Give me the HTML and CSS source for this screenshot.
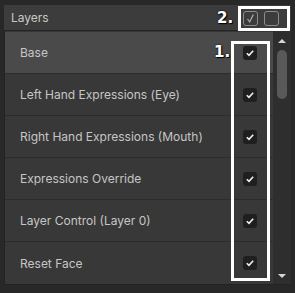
FILE: index.html
```html
<!DOCTYPE html>
<html>
<head>
<meta charset="utf-8">
<link rel="stylesheet" href="styles.css">
</head>
<body>
<div class="panel">
  <div class="header">
    <span class="title">Layers</span>
    <div class="tools">
      <span class="tool">
        <svg width="13" height="13" viewBox="0 0 13 13"><path d="M3.5 7 L5.7 9.9 L9.3 2.5" fill="none" stroke="#b0b0b0" stroke-width="1.2"/></svg>
      </span>
      <span class="tool"></span>
    </div>
  </div>
  <div class="list">
    <div class="rows">
      <div class="row selected"><span class="label">Base</span><span class="check"><svg width="14" height="14" viewBox="0 0 14 14"><path d="M3.8 7.2 L6 9.4 L10.2 4.8" fill="none" stroke="#f0f0f0" stroke-width="1.6"/></svg></span></div>
      <div class="row"><span class="label">Left Hand Expressions (Eye)</span><span class="check"><svg width="14" height="14" viewBox="0 0 14 14"><path d="M3.8 7.2 L6 9.4 L10.2 4.8" fill="none" stroke="#f0f0f0" stroke-width="1.6"/></svg></span></div>
      <div class="row"><span class="label">Right Hand Expressions (Mouth)</span><span class="check"><svg width="14" height="14" viewBox="0 0 14 14"><path d="M3.8 7.2 L6 9.4 L10.2 4.8" fill="none" stroke="#f0f0f0" stroke-width="1.6"/></svg></span></div>
      <div class="row"><span class="label">Expressions Override</span><span class="check"><svg width="14" height="14" viewBox="0 0 14 14"><path d="M3.8 7.2 L6 9.4 L10.2 4.8" fill="none" stroke="#f0f0f0" stroke-width="1.6"/></svg></span></div>
      <div class="row"><span class="label">Layer Control (Layer 0)</span><span class="check"><svg width="14" height="14" viewBox="0 0 14 14"><path d="M3.8 7.2 L6 9.4 L10.2 4.8" fill="none" stroke="#f0f0f0" stroke-width="1.6"/></svg></span></div>
      <div class="row last"><span class="label">Reset Face</span><span class="check"><svg width="14" height="14" viewBox="0 0 14 14"><path d="M3.8 7.2 L6 9.4 L10.2 4.8" fill="none" stroke="#f0f0f0" stroke-width="1.6"/></svg></span></div>
    </div>
    <div class="scrollbar">
      <span class="arrow up"></span>
      <span class="thumb"></span>
      <span class="spacer"></span>
      <span class="arrow down"></span>
    </div>
  </div>
</div>
<div class="note-box box-one"></div>
<div class="note-box box-two"></div>
<span class="note-num num-one">1.</span>
<span class="note-num num-two">2.</span>
</body>
</html>
```
FILE: styles.css
```css
html, body {
  margin: 0;
  padding: 0;
  background: #282828;
  width: 295px;
  height: 293px;
  overflow: hidden;
  font-family: Inter, "Liberation Sans", sans-serif;
}
body {
  position: relative;
}
.panel {
  margin: 5px 4px 0 4px;
  display: flex;
  flex-direction: column;
}
.header {
  height: 25px;
  background: #3c3c3c;
  border-bottom: 1px solid #242424;
  display: flex;
  align-items: center;
  justify-content: space-between;
  padding: 0 12px 0 7px;
}
.title {
  color: #c8c8c8;
  font-size: 12px;
}
.tools {
  display: flex;
  gap: 6px;
  align-items: center;
  margin-top: 1px;
}
.tool {
  width: 13px;
  height: 13px;
  border: 1px solid #8c8c8c;
  border-radius: 3px;
  display: flex;
}
.list {
  display: flex;
  height: 253px;
  border-left: 1px solid #232323;
  border-bottom: 1px solid #232323;
  background: #363636;
}
.rows {
  flex: 1;
  display: flex;
  flex-direction: column;
  padding-top: 1px;
}
.row {
  height: 42px;
  box-sizing: border-box;
  border-bottom: 1px solid #2c2c2c;
  background: #383838;
  display: flex;
  align-items: center;
  justify-content: space-between;
  padding: 0 16px 0 15px;
}
.row.selected {
  background: #4a4a4a;
}
.row.last {
  border-bottom: none;
}
.label {
  color: #c6c6c6;
  font-size: 12px;
}
.check {
  width: 14px;
  height: 14px;
  background: #1f1f1f;
  border-radius: 3px;
  display: flex;
}
.scrollbar {
  width: 17px;
  background: #2e2e2e;
  display: flex;
  flex-direction: column;
  align-items: center;
  padding-right: 1px;
}
.arrow {
  width: 0;
  height: 0;
  border-left: 4px solid transparent;
  border-right: 4px solid transparent;
}
.arrow.up {
  margin-top: 8px;
  border-bottom: 4px solid #d6d6d6;
}
.arrow.down {
  margin-bottom: 6px;
  border-top: 4px solid #d6d6d6;
}
.thumb {
  margin-top: 7px;
  width: 10px;
  height: 49px;
  border-radius: 5px;
  background: #595959;
}
.spacer {
  flex: 1;
}
.note-box {
  position: absolute;
  border: 3px solid #ffffff;
  box-sizing: border-box;
}
.box-one {
  left: 231px;
  top: 41px;
  width: 39px;
  height: 240px;
}
.box-two {
  left: 238px;
  top: 6px;
  width: 52px;
  height: 25px;
}
.note-num {
  position: absolute;
  color: #ffffff;
  font-family: "DejaVu Sans", sans-serif;
  font-weight: bold;
  font-size: 15px;
  line-height: 15px;
  text-shadow: 0 0 2px #000, 1px 1px 1px #000;
}
.num-one {
  left: 214px;
  top: 45px;
}
.num-two {
  left: 217px;
  top: 11px;
}
```
